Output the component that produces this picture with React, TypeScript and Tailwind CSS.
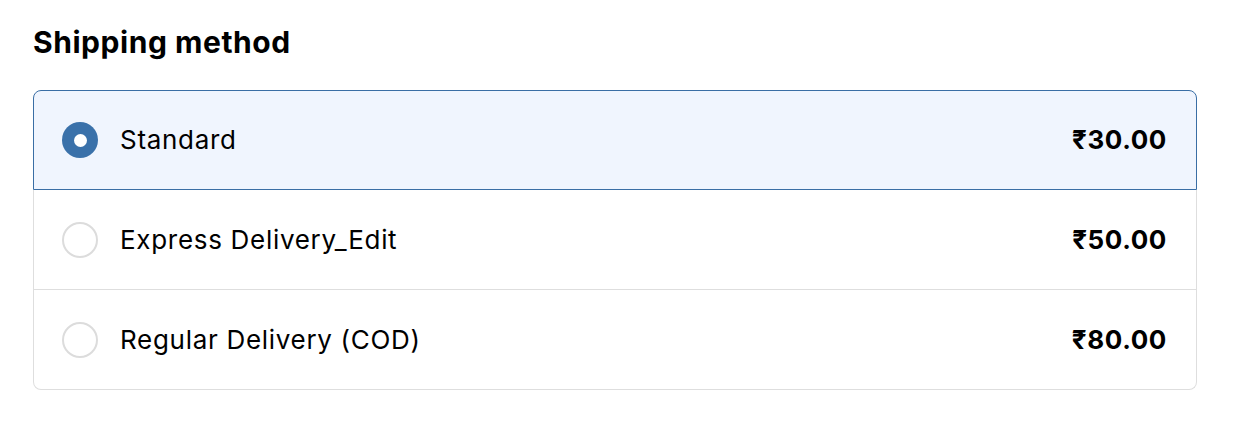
const methods = [
  { name: "Standard", price: "₹30.00" },
  { name: "Express Delivery_Edit", price: "₹50.00" },
  { name: "Regular Delivery (COD)", price: "₹80.00" },
];

function App() {
  const selected = 0;
  return (
    <div className="min-h-screen bg-white px-[33px] pt-[22px] text-black" style={{ fontFamily: "Inter, 'Noto Sans', sans-serif" }}>
      <h2 className="text-[30px] font-bold leading-[40px] tracking-[0.55px]">Shipping method</h2>
      <div className="mt-[28px] w-[1164px]">
        {methods.map((m, i) => {
          const isSel = i === selected;
          const rounded =
            i === 0 ? "rounded-t-[8px]" : i === methods.length - 1 ? "rounded-b-[8px]" : "";
          const border = isSel
            ? "border border-[#3a6ea5] bg-[#f0f5fe]"
            : "border-x border-b border-[#dedede] bg-white";
          return (
            <label
              key={m.name}
              className={`flex h-[100px] cursor-pointer items-center pl-[28px] pr-[29px] ${rounded} ${border}`}
            >
              {isSel ? (
                <span className="flex h-[36px] w-[36px] items-center justify-center rounded-full bg-[#3a71aa]">
                  <span className="h-[13px] w-[13px] rounded-full bg-white" />
                </span>
              ) : (
                <span className="h-[36px] w-[36px] rounded-full border-2 border-[#dcdcdc] bg-white" />
              )}
              <span className="ml-[22px] flex-1 text-[26px] leading-[32px] tracking-[0.7px]">{m.name}</span>
              <span className="text-[26px] font-bold leading-[32px] tracking-[0.6px]">{m.price}</span>
            </label>
          );
        })}
      </div>
    </div>
  );
}

export default App;
